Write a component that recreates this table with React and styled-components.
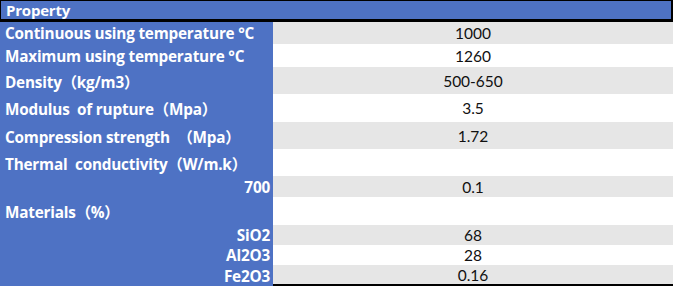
import React from "react";
import styled, { createGlobalStyle } from "styled-components";

const GlobalStyle = createGlobalStyle`
    html, body {
        margin: 0;
        padding: 0;
        background: #ffffff;
    }
    body {
        font-family: "Open Sans", "Noto Sans CJK SC", sans-serif;
    }
`

const Tabela = styled.div`
    width: 673px;
    display: flex;
    flex-direction: column;
`

const Cabecalho = styled.div`
    height: 18px;
    display: flex;
    align-items: center;
    padding-left: 5px;
    background: #4e72c4;
    border-top: 1px solid #000;
    border-right: 2px solid #000;
    border-bottom: 3px solid #000;
    border-left: 1px solid #000;
    color: #fff;
    font-weight: 700;
    font-size: 15px;
    letter-spacing: -0.2px;
`

const Linha = styled.div`
    display: grid;
    grid-template-columns: 273px 1fr;
    height: ${p => p.$altura}px;
`

const Rotulo = styled.div`
    background: #4e72c4;
    color: #fff;
    font-weight: 700;
    font-size: 15.3px;
    letter-spacing: -0.2px;
    display: flex;
    align-items: center;
    justify-content: ${p => p.$direita ? "flex-end" : "flex-start"};
    padding: ${p => p.$direita ? "0 3px 0 0" : "0 0 0 5px"};
    white-space: pre;
`

const Valor = styled.div`
    background: ${p => p.$cinza ? "#e6e6e6" : "#ffffff"};
    color: #111;
    font-family: Lato, sans-serif;
    font-size: 15.5px;
    display: flex;
    align-items: center;
    justify-content: center;
    border-bottom: ${p => p.$ultima ? "2px solid #000" : "none"};
`

const linhas = [
    { rotulo: "Continuous using temperature °C", valor: "1000", altura: 22 },
    { rotulo: "Maximum using temperature °C", valor: "1260", altura: 23 },
    { rotulo: "Density（kg/m3）", valor: "500-650", altura: 27 },
    { rotulo: "Modulus  of rupture（Mpa）", valor: "3.5", altura: 28 },
    { rotulo: "Compression strength  （Mpa）", valor: "1.72", altura: 27 },
    { rotulo: "Thermal  conductivity（W/m.k）", valor: "", altura: 27 },
    { rotulo: "700", valor: "0.1", altura: 21, direita: true },
    { rotulo: "Materials（%）", valor: "", altura: 28 },
    { rotulo: "SiO2", valor: "68", altura: 20, direita: true },
    { rotulo: "Al2O3", valor: "28", altura: 20, direita: true },
    { rotulo: "Fe2O3", valor: "0.16", altura: 21, direita: true },
]

export default function App() {
    return (
        <>
            <GlobalStyle />
            <Tabela>
                <Cabecalho>Property</Cabecalho>
                {linhas.map((l, i) => (
                    <Linha key={i} $altura={l.altura}>
                        <Rotulo $direita={l.direita}>{l.rotulo}</Rotulo>
                        <Valor $cinza={i % 2 === 0} $ultima={i === linhas.length - 1}>{l.valor}</Valor>
                    </Linha>
                ))}
            </Tabela>
        </>
    )
}
